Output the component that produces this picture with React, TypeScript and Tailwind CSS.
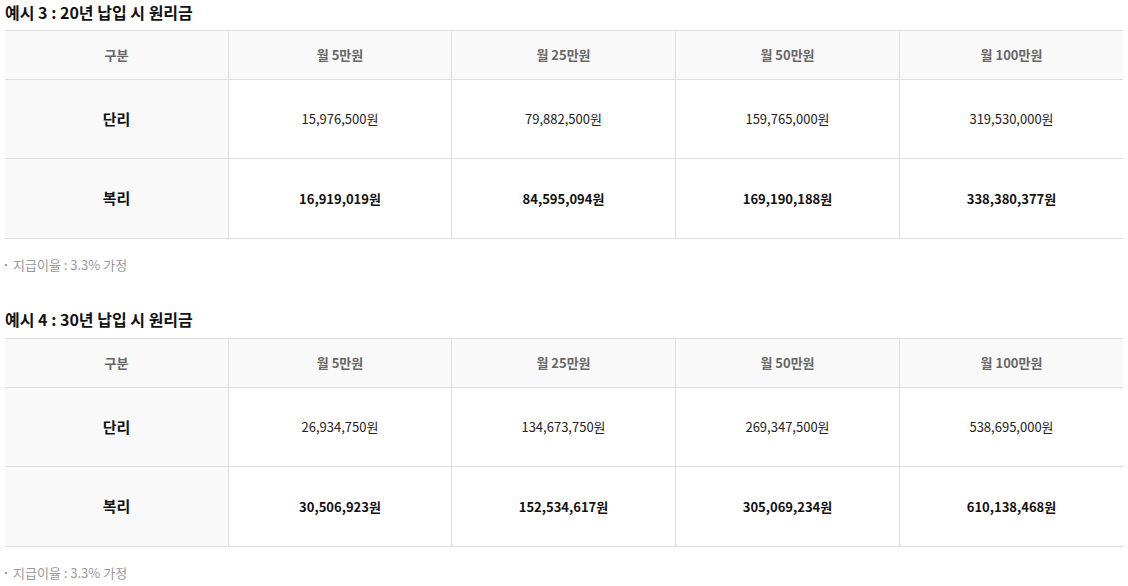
import React from "react";

type Sec = { title: string; simple: string[]; compound: string[] };

const sections: Sec[] = [
  {
    title: "예시 3 : 20년 납입 시 원리금",
    simple: ["15,976,500원", "79,882,500원", "159,765,000원", "319,530,000원"],
    compound: ["16,919,019원", "84,595,094원", "169,190,188원", "338,380,377원"],
  },
  {
    title: "예시 4 : 30년 납입 시 원리금",
    simple: ["26,934,750원", "134,673,750원", "269,347,500원", "538,695,000원"],
    compound: ["30,506,923원", "152,534,617원", "305,069,234원", "610,138,468원"],
  },
];

const heads = ["월 5만원", "월 25만원", "월 50만원", "월 100만원"];

function Section({ s, first }: { s: Sec; first: boolean }) {
  return (
    <div className={first ? "" : "mt-[33px]"}>
      <div className="text-[16px] leading-[24px] font-bold text-[#111]">{s.title}</div>
      <div className={first ? "mt-[6px]" : "mt-[7px]"}>
        <div className="grid grid-cols-[223px_223px_224px_224px_1fr] border-t border-[#dedede]">
          <div className="h-[49px] flex items-center justify-center bg-[#f9f9f9] border-b border-[#dedede] text-[13px] font-bold text-[#666]">
            구분
          </div>
          {heads.map((h) => (
            <div
              key={h}
              className="h-[49px] flex items-center justify-center bg-[#f9f9f9] border-b border-l border-[#dedede] text-[13px] font-bold text-[#666]"
            >
              {h}
            </div>
          ))}
          <div className="h-[79px] flex items-center justify-center bg-[#f9f9f9] border-b border-[#dedede] text-[15px] font-bold text-[#111]">
            단리
          </div>
          {s.simple.map((v) => (
            <div
              key={v}
              className="h-[79px] flex items-center justify-center border-b border-l border-[#dedede] text-[13px] text-[#222]"
            >
              {v}
            </div>
          ))}
          <div className="h-[80px] flex items-center justify-center bg-[#f9f9f9] border-b border-[#dedede] text-[15px] font-bold text-[#111]">
            복리
          </div>
          {s.compound.map((v) => (
            <div
              key={v}
              className="h-[80px] flex items-center justify-center border-b border-l border-[#dedede] text-[13px] font-bold text-[#111]"
            >
              {v}
            </div>
          ))}
        </div>
      </div>
      <div className="mt-[17px] flex items-center text-[13px] leading-[18px] text-[#999]">
        <span className="inline-block w-[2px] h-[2px] bg-[#999] mr-[6px]"></span>
        지급이율 : 3.3% 가정
      </div>
    </div>
  );
}

export default function App() {
  return (
    <div
      className="w-[1128px] h-[586px] overflow-hidden bg-white pl-[5px] pr-[5px]"
      style={{ fontFamily: '"Noto Sans CJK KR", "Noto Sans", sans-serif' }}
    >
      {sections.map((s, i) => (
        <Section key={s.title} s={s} first={i === 0} />
      ))}
    </div>
  );
}
